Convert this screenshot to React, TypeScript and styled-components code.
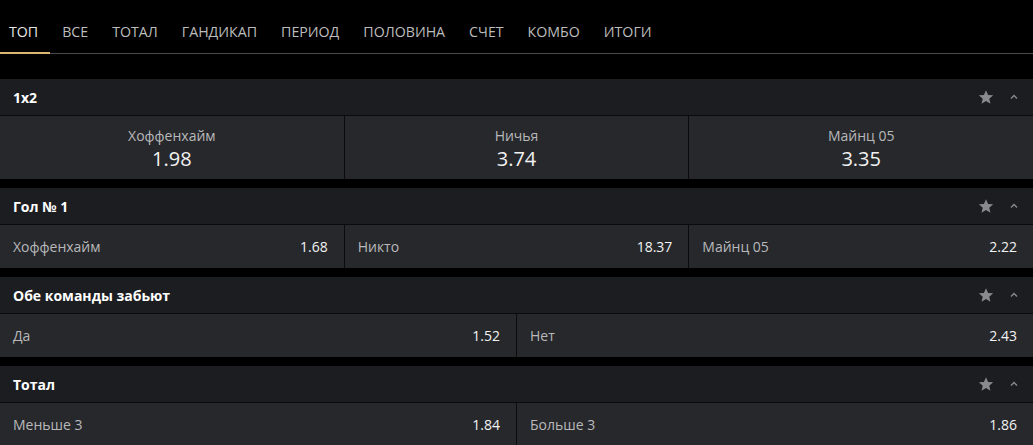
import styled, { createGlobalStyle } from "styled-components";

const GlobalStyle = createGlobalStyle`
	body {
		margin: 0;
		background: #000;
		font-family: "Open Sans", "Liberation Sans", sans-serif;
	}
`;

type Outcome = { label: string; value: string };
type Market = { title: string; big?: boolean; outcomes: Outcome[] };

const tabs = ["ТОП", "ВСЕ", "ТОТАЛ", "ГАНДИКАП", "ПЕРИОД", "ПОЛОВИНА", "СЧЕТ", "КОМБО", "ИТОГИ"];

const markets: Market[] = [
	{
		title: "1х2",
		big: true,
		outcomes: [
			{ label: "Хоффенхайм", value: "1.98" },
			{ label: "Ничья", value: "3.74" },
			{ label: "Майнц 05", value: "3.35" },
		],
	},
	{
		title: "Гол № 1",
		outcomes: [
			{ label: "Хоффенхайм", value: "1.68" },
			{ label: "Никто", value: "18.37" },
			{ label: "Майнц 05", value: "2.22" },
		],
	},
	{
		title: "Обе команды забьют",
		outcomes: [
			{ label: "Да", value: "1.52" },
			{ label: "Нет", value: "2.43" },
		],
	},
	{
		title: "Тотал",
		outcomes: [
			{ label: "Меньше 3", value: "1.84" },
			{ label: "Больше 3", value: "1.86" },
		],
	},
];

const StarIcon = () => (
	<svg width="16" height="16" viewBox="0 0 24 24">
		<path
			fill="currentColor"
			d="M12 1.8l3.1 7.1 7.6.6-5.8 5 1.8 7.5L12 18l-6.7 4 1.8-7.5-5.8-5 7.6-.6z"
		/>
	</svg>
);

const ChevronIcon = () => (
	<svg width="10" height="10" viewBox="0 0 10 10">
		<path d="M2 6.5L5 3.5l3 3" fill="none" stroke="currentColor" strokeWidth="1.4" />
	</svg>
);

export default function App() {
	return (
		<>
			<GlobalStyle />
			<Page>
				<TabBar>
					{tabs.map((t, i) => (
						<Tab key={t} $active={i === 0}>
							{t}
						</Tab>
					))}
				</TabBar>
				<Markets>
					{markets.map((m) => (
						<Section key={m.title}>
							<Header>
								<Title>{m.title}</Title>
								<Actions>
									<StarIcon />
									<ChevronIcon />
								</Actions>
							</Header>
							<Row $cols={m.outcomes.length}>
								{m.outcomes.map((o) =>
									m.big ? (
										<BigCell key={o.label}>
											<Label>{o.label}</Label>
											<BigValue>{o.value}</BigValue>
										</BigCell>
									) : (
										<Cell key={o.label}>
											<Label>{o.label}</Label>
											<Value>{o.value}</Value>
										</Cell>
									)
								)}
							</Row>
						</Section>
					))}
				</Markets>
			</Page>
		</>
	);
}

const Page = styled.div`
	width: 1033px;
	height: 445px;
	overflow: hidden;
	background: #000;
`;

const TabBar = styled.nav`
	display: flex;
	height: 53px;
	border-bottom: 1px solid #4a4a4a;
`;

const Tab = styled.div<{ $active?: boolean }>`
	display: flex;
	align-items: center;
	box-sizing: border-box;
	height: 54px;
	padding: 10px 12px 0;
	margin-bottom: -1px;
	font-size: 14.2px;
	color: ${(p) => (p.$active ? "#e6e6e6" : "#bdbdbd")};
	border-bottom: 2px solid ${(p) => (p.$active ? "#d9b66f" : "transparent")};

	&:first-child {
		padding-left: 9px;
	}
`;

const Markets = styled.div`
	display: flex;
	flex-direction: column;
	gap: 9px;
	padding-top: 25px;
`;

const Section = styled.section`
	display: flex;
	flex-direction: column;
`;

const Header = styled.div`
	display: flex;
	align-items: center;
	justify-content: space-between;
	height: 36px;
	padding: 0 14px 0 13px;
	background: #1c1d20;
	border-bottom: 1px solid #0b0b0c;
`;

const Title = styled.span`
	font-size: 14px;
	font-weight: 700;
	color: #fff;
`;

const Actions = styled.div`
	display: flex;
	align-items: center;
	gap: 15px;
	color: #8a8a8c;
`;

const Row = styled.div<{ $cols: number }>`
	display: grid;
	grid-template-columns: repeat(${(p) => p.$cols}, 1fr);
	gap: 1px;
	background: #0b0b0c;
`;

const Cell = styled.div`
	display: flex;
	align-items: center;
	justify-content: space-between;
	height: 43px;
	padding: 0 16px 0 13px;
	background: #27282c;
`;

const BigCell = styled.div`
	display: flex;
	flex-direction: column;
	align-items: center;
	box-sizing: border-box;
	height: 63px;
	padding-top: 10px;
	background: #27282c;
`;

const Label = styled.span`
	font-size: 14px;
	line-height: 20px;
	color: #b8b8ba;
`;

const Value = styled.span`
	font-size: 14px;
	color: #f2f2f2;
`;

const BigValue = styled.span`
	font-size: 20px;
	line-height: 26px;
	color: #f2f2f2;
`;
